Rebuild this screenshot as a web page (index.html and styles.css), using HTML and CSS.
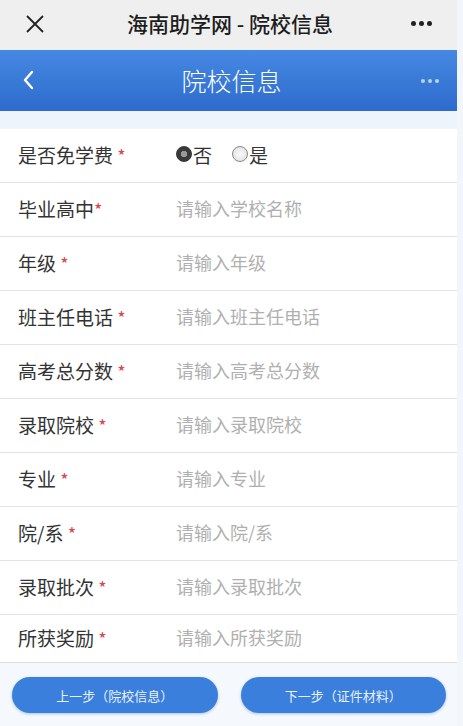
FILE: index.html
```html
<!DOCTYPE html>
<html lang="zh">
<head>
<meta charset="utf-8">
<link rel="stylesheet" href="styles.css">
</head>
<body>
<div class="page">
  <div class="main">
    <div class="wxbar">
      <svg class="wx-close" width="20" height="20" viewBox="0 0 20 20"><path d="M2 2 L18 18 M18 2 L2 18" stroke="#222" stroke-width="1.8" fill="none"/></svg>
      <div class="wx-title">海南助学网 - 院校信息</div>
      <div class="wx-dots"><i></i><i></i><i></i></div>
    </div>
    <div class="header">
      <svg class="back" width="12" height="20" viewBox="0 0 12 20"><path d="M10 2 L3 10 L10 18" stroke="#fff" stroke-width="2.4" fill="none" stroke-linecap="round" stroke-linejoin="round"/></svg>
      <div class="h-title">院校信息</div>
      <div class="h-dots"><i></i><i></i><i></i></div>
    </div>
    <div class="gap"></div>
    <div class="form">
      <div class="row first">
        <div class="label">是否免学费 <span class="req">*</span></div>
        <div class="radios">
          <span class="radio on"></span><span class="rtext">否</span>
          <span class="radio"></span><span class="rtext">是</span>
        </div>
      </div>
      <div class="row"><div class="label">毕业高中<span class="req">*</span></div><div class="ph">请输入学校名称</div></div>
      <div class="row"><div class="label">年级 <span class="req">*</span></div><div class="ph">请输入年级</div></div>
      <div class="row"><div class="label">班主任电话 <span class="req">*</span></div><div class="ph">请输入班主任电话</div></div>
      <div class="row"><div class="label">高考总分数 <span class="req">*</span></div><div class="ph">请输入高考总分数</div></div>
      <div class="row"><div class="label">录取院校 <span class="req">*</span></div><div class="ph">请输入录取院校</div></div>
      <div class="row"><div class="label">专业 <span class="req">*</span></div><div class="ph">请输入专业</div></div>
      <div class="row"><div class="label">院/系 <span class="req">*</span></div><div class="ph">请输入院/系</div></div>
      <div class="row"><div class="label">录取批次 <span class="req">*</span></div><div class="ph">请输入录取批次</div></div>
      <div class="row last"><div class="label">所获奖励 <span class="req">*</span></div><div class="ph">请输入所获奖励</div></div>
    </div>
    <div class="actions">
      <button class="btn">上一步（院校信息）</button>
      <button class="btn">下一步（证件材料）</button>
    </div>
  </div>
  <div class="edge"></div>
</div>
</body>
</html>
```
FILE: styles.css
```css
* { box-sizing: border-box; }
html, body { margin: 0; padding: 0; }
body {
  font-family: "Noto Sans CJK SC", "Noto Sans", sans-serif;
  background: #f4f7fb;
  width: 463px;
  height: 726px;
  overflow: hidden;
}
.page { display: flex; height: 726px; }
.main { width: 457px; display: flex; flex-direction: column; }
.edge { width: 6px; background: #f2f5f9; }

.wxbar {
  height: 50px;
  background: #efefef;
  display: flex;
  align-items: center;
  padding: 0 25px;
}
.wx-close { display: block; margin-top: -2px; }
.wx-title {
  flex: 1;
  text-align: center;
  font-size: 21px;
  font-weight: 500;
  color: #1d1d1d;
  margin-top: -4px;
  padding-left: 4px;
}
.wx-dots { display: flex; gap: 3px; margin-top: -3px; }
.wx-dots i { width: 5px; height: 5px; border-radius: 50%; background: #222; display: block; }

.header {
  height: 61px;
  background: linear-gradient(#4689e2, #2d6bcc);
  display: flex;
  align-items: center;
  padding: 0 22px;
}
.back { display: block; margin-top: -2px; }
.h-title {
  flex: 1;
  text-align: center;
  color: #fff;
  font-size: 25px;
  font-weight: 300;
  margin-top: -2px;
  padding-left: 8px;
}
.h-dots { display: flex; gap: 3px; margin-right: -4px; }
.h-dots i { width: 4px; height: 4px; border-radius: 50%; background: #b9d3f5; display: block; }

.gap { height: 17px; background: #eef4fb; }

.form { background: #fff; }
.row {
  height: 54px;
  display: flex;
  align-items: center;
  padding-left: 18px;
  border-top: 1px solid #e3e3e3;
}
.row.first { border-top: 1px solid #f3f5f8; }
.row.last { height: 49px; border-bottom: 1px solid #dcdcdc; }
.label {
  width: 158px;
  font-size: 19px;
  color: #333;
  margin-top: -3px;
}
.req { color: #d9434a; font-size: 18px; }
.ph { font-size: 18px; color: #b0b0b0; margin-top: -3px; }

.radios { display: flex; align-items: center; margin-top: -3px; }
.radio {
  width: 16px; height: 16px; border-radius: 50%;
  border: 1px solid #888;
  background: radial-gradient(circle at 50% 50%, #fafafa, #dcdcdc);
  display: block;
  margin-right: 1px;
}
.radio.on {
  border: 1px solid #333;
  background: radial-gradient(circle, #999 0 3px, #3a3a3a 3.5px);
}
.rtext { font-size: 19px; color: #333; margin-right: 20px; }

.actions {
  flex: 1;
  background: #f5f8fc;
  display: flex;
  gap: 23px;
  padding: 14px 11px 0 12px;
}
.btn {
  flex: 1;
  height: 36px;
  border: none;
  border-radius: 18px;
  background: #3b7fdc;
  color: #e9f1fc;
  font-family: "Noto Sans CJK SC", sans-serif;
  font-size: 13px;
  box-shadow: 0 1px 3px rgba(40, 100, 200, 0.35);
  padding: 0;
}
```
